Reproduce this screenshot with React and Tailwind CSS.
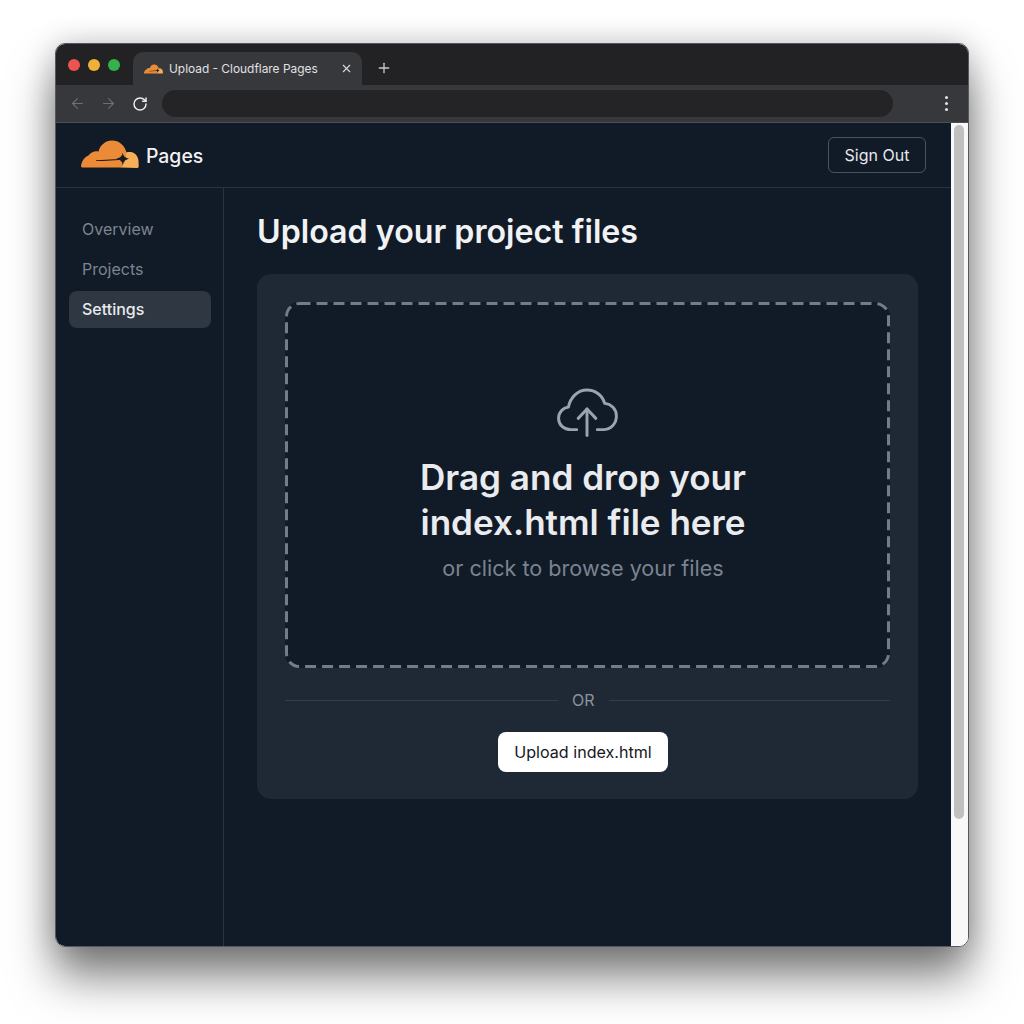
import { ArrowLeft, ArrowRight, RotateCw, X, Plus } from "lucide-react";

const CloudLogo = ({ className }) => (
  <svg viewBox="0 0 58 28" className={className}>
    <path
      d="M1.200 27.500C0 27.500-.2 26 .3 24.200 1.300 20 4 16.800 7.500 15.500 9.500 12.300 13.500 10.600 17.500 11.400 19 5.500 24.500.6 31 .6c7 0 12.300 4.500 14.500 11.700L44 20l-4 7.500z"
      fill="#ec8b37"
    />
    <path
      d="M39.500 27.500c2-2 3.700-4.700 4.500-7.500l1.200-7.600c1.400-.3 3-.5 4.600-.3 4.200.5 7.200 4.200 7.700 8.400l.2 5.800c0 1.200-.5 1.700-1.500 1.700z"
      fill="#f6ad58"
    />
    <path d="M15 20.300L38 18.900 38 19.900 22 21.100 15 21z" fill="#241a14" />
    <path d="M41.800 12.800c.4 3 1.600 5 6.200 6-4.300 1-5.600 2.800-6.200 6-.7-3.200-2.200-5-6.500-6 4.400-1 5.800-3 6.500-6z" fill="#161a22" />
  </svg>
);

const UploadCloud = ({ className }) => (
  <svg viewBox="0 0 62 50" fill="none" stroke="#9ca3af" strokeWidth="3" strokeLinecap="round" strokeLinejoin="round" className={className}>
    <path d="M20 42.500H14C6.800 42.500 1.500 37.500 1.500 31c0-6 4.300-10.800 10-11.500C13.500 9.500 21 2 30.500 2c8.700 0 15.800 5.700 18 13.700 6.700.6 12 5.800 12 12.900 0 7.800-5.700 13.900-13.500 13.900h-6" />
    <path d="M30.500 48.500V21.500" />
    <path d="M21.500 31l9-9.500 9 9.500" />
  </svg>
);

const NavItem = ({ label, active }) => (
  <div
    className={
      active
        ? "h-[37px] flex items-center rounded-lg bg-[#2f3742] px-[13px] pb-[1px] text-[16px] font-medium text-[#e8eaed]"
        : "h-[37px] flex items-center px-[13px] pb-[1px] text-[16px] text-[#7d8490]"
    }
  >
    {label}
  </div>
);

export default function App() {
  return (
    <div className="min-h-[1024px] bg-white pt-[43px] pl-[55px] font-['Inter',sans-serif] overflow-hidden">
      <div className="w-[914px] h-[904px] flex flex-col rounded-[10px] overflow-hidden border border-[#55585e] shadow-[0_30px_45px_rgba(0,0,0,0.5),0_0_30px_rgba(0,0,0,0.2)]">
        {/* Tab strip */}
        <div className="h-[41px] shrink-0 flex items-end bg-[#222225]">
          <div className="w-[77px] h-[41px] flex items-center gap-[8px] pl-[12px]">
            <span className="w-3 h-3 rounded-full bg-[#ee5350]" />
            <span className="w-3 h-3 rounded-full bg-[#eeb03b]" />
            <span className="w-3 h-3 rounded-full bg-[#35b04c]" />
          </div>
          <div className="w-[229px] h-[33px] flex items-center rounded-t-[10px] bg-[#37383b] pl-[11px] pr-[9px]">
            <CloudLogo className="w-[19px] h-[10px]" />
            <span className="ml-[6px] flex-1 text-[11.900px] text-[#e0e1e3] whitespace-nowrap">Upload - Cloudflare Pages</span>
            <X className="w-[13px] h-[13px] text-[#d8d9db]" strokeWidth={2} />
          </div>
          <div className="h-[33px] flex items-center ml-[14px] pb-[2px]">
            <Plus className="w-[16px] h-[16px] text-[#c8c9cb]" strokeWidth={2} />
          </div>
        </div>

        {/* Toolbar */}
        <div className="h-[38px] shrink-0 flex items-center bg-[#37383b] border-b border-[#4c4e52] pl-[13px] pr-[20px]">
          <ArrowLeft className="w-[17px] h-[17px] text-[#6d6f73]" strokeWidth={1.500} />
          <ArrowRight className="w-[17px] h-[17px] ml-[14px] text-[#6d6f73]" strokeWidth={1.500} />
          <RotateCw className="w-[16px] h-[16px] ml-[15px] text-[#eceded]" strokeWidth={2.200} />
          <div className="flex-1 h-[27px] ml-[14px] mr-[52px] rounded-full bg-[#242426]" />
          <div className="flex flex-col gap-[3px]">
            <span className="w-[3px] h-[3px] rounded-full bg-[#e2e3e4]" />
            <span className="w-[3px] h-[3px] rounded-full bg-[#e2e3e4]" />
            <span className="w-[3px] h-[3px] rounded-full bg-[#e2e3e4]" />
          </div>
        </div>

        {/* Page + scrollbar */}
        <div className="flex-1 min-h-0 flex">
          <div className="flex-1 min-w-0 flex flex-col bg-[#111a27]">
            <header className="h-[65px] shrink-0 flex items-center justify-between border-b border-[#2a3340] pl-[25px] pr-[25px]">
              <div className="flex items-center gap-[7px]">
                <CloudLogo className="w-[58px] h-[28px] -mt-[2px]" />
                <span className="text-[19.400px] font-medium text-[#f1f2f4] mt-[4px]">Pages</span>
              </div>
              <button className="h-[36px] w-[98px] rounded-md border border-[#4a5361] text-[16px] text-[#e6e8eb]">
                Sign Out
              </button>
            </header>

            <div className="flex-1 min-h-0 flex">
              <aside className="w-[168px] shrink-0 border-r border-[#2a3340] pl-[13px] pr-[12px] pt-[23px] flex flex-col gap-[3px]">
                <NavItem label="Overview" />
                <NavItem label="Projects" />
                <NavItem label="Settings" active />
              </aside>

              <main className="flex-1 min-w-0 pl-[33px] pr-[33px] pt-[22px]">
                <h1 className="text-[32.200px] leading-[44px] font-semibold text-[#f0f2f4]">Upload your project files</h1>
                <div className="mt-[20px] h-[525px] rounded-[14px] bg-[#1f2935] px-[28px] pt-[28px]">
                  {/* Drop zone */}
                  <div className="relative h-[366px] rounded-[14px] bg-[#111a27] flex flex-col items-center pt-[86px]">
                    <svg className="absolute inset-0 w-full h-full" fill="none">
                      <rect x="1.500" y="1.500" width="602" height="363" rx="13" stroke="#737c88" strokeWidth="3" strokeDasharray="11 6" />
                    </svg>
                    <UploadCloud className="w-[61px] h-[49px]" />
                    <p className="mt-[18px] mr-[9px] text-center text-[35.100px] leading-[45px] font-semibold text-[#e9ebee]">
                      Drag and drop your
                      <br />
                      index.html file here
                    </p>
                    <p className="mt-[8px] mr-[9px] text-[21.600px] leading-[30px] text-[#7b8390]">or click to browse your files</p>
                  </div>

                  {/* Divider */}
                  <div className="mt-[22px] h-[20px] flex items-center gap-[14px]">
                    <div className="w-[273px] h-px bg-[#343e4b]" />
                    <span className="text-[16px] text-[#8c939d]">OR</span>
                    <div className="flex-1 h-px bg-[#343e4b]" />
                  </div>

                  <div className="mt-[22px] mr-[9px] flex justify-center">
                    <button className="h-[40px] w-[170px] rounded-lg bg-white text-[16.100px] text-[#15181d]">
                      Upload index.html
                    </button>
                  </div>
                </div>
              </main>
            </div>
          </div>

          {/* Scrollbar */}
          <div className="w-[17px] shrink-0 bg-[#f8f8f8] pt-[2px] pl-[3px]">
            <div className="w-[10px] h-[694px] rounded-full bg-[#c0c0c0]" />
          </div>
        </div>
      </div>
    </div>
  );
}
